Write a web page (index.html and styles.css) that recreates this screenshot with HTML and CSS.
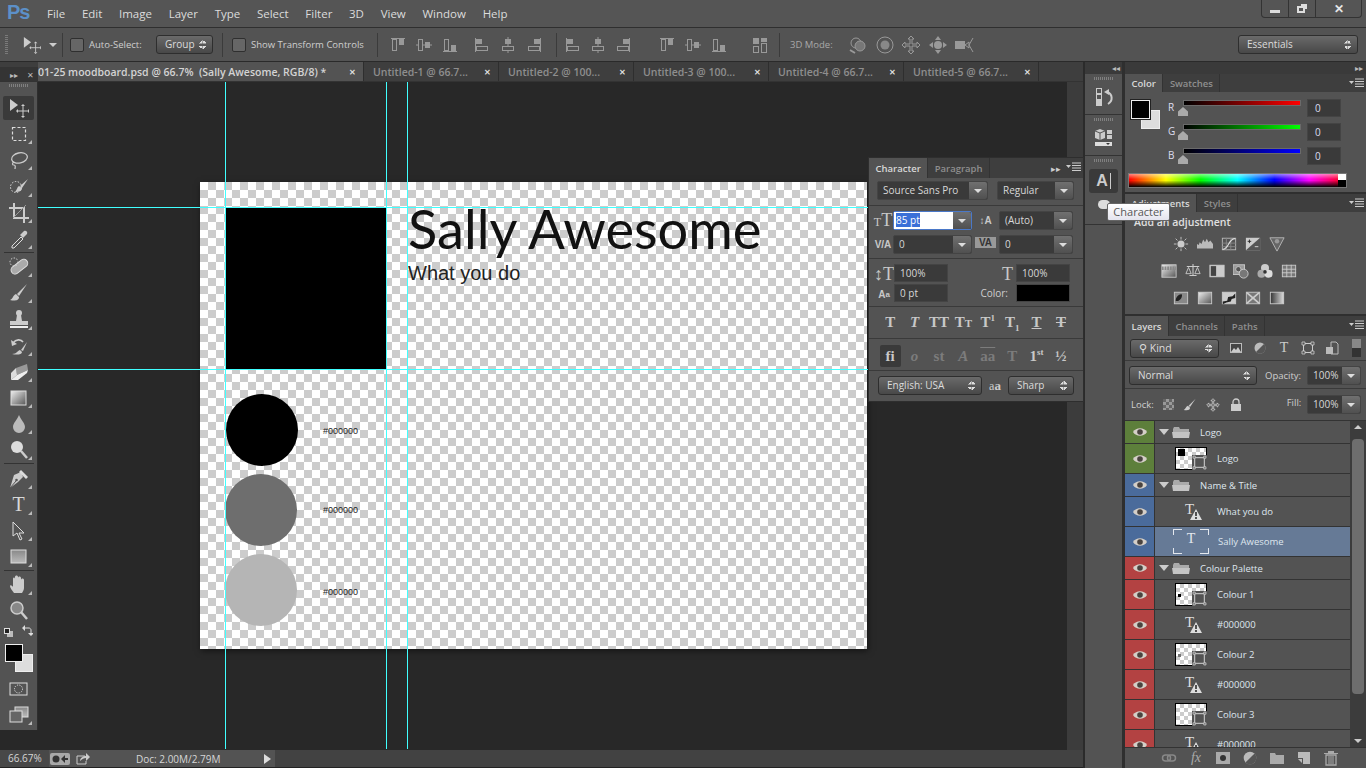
FILE: index.html
```html
<!DOCTYPE html>
<html lang="en">
<head>
    <meta charset="UTF-8">
    <title>Photoshop - moodboard</title>
    <link rel="stylesheet" href="styles.css">
</head>
<body>
<svg class="defs" width="0" height="0">
    <defs>
        <linearGradient id="gr" x1="0" y1="0" x2="1" y2="1"><stop offset="0" stop-color="#eee"/><stop offset="1" stop-color="#555"/></linearGradient>
        <linearGradient id="gv" x1="0" y1="0" x2="0" y2="1"><stop offset="0" stop-color="#888"/><stop offset="1" stop-color="#bbb"/></linearGradient>
        <symbol id="move" viewBox="0 0 20 20"><path d="M1 1v12l8-6z" fill="#ccc"/><path d="M14 8v10M9 13h10" stroke="#ccc" fill="none"/><path d="M14 6l2 2h-4zM14 20l2-2h-4zM7 13l2-2v4zM21 13l-2-2v4z" fill="#ccc"/></symbol>
        <symbol id="marquee" viewBox="0 0 20 20"><rect x="3.500" y="3.500" width="13" height="13" fill="none" stroke="#ddd" stroke-width="1.200" stroke-dasharray="3 2"/></symbol>
        <symbol id="lasso" viewBox="0 0 20 20"><ellipse cx="10.500" cy="8" rx="8" ry="5" transform="rotate(-12 10 8)" fill="none" stroke="#ccc" stroke-width="1.300"/><path d="M5 12c-2 1-2 3 0 3s1 3 1 4" fill="none" stroke="#ccc" stroke-width="1.200"/></symbol>
        <symbol id="quick" viewBox="0 0 20 20"><circle cx="7" cy="11" r="5.500" fill="none" stroke="#ddd" stroke-dasharray="1.500 1.500"/><path d="M19 3L11 10l2 2z" fill="#ccc"/><path d="M10 10c-2 1-2 4-4 6 4 0 7-1 7-4z" fill="#ccc"/></symbol>
        <symbol id="crop" viewBox="0 0 20 20"><path d="M5 0v15h15M0 5h15v15" fill="none" stroke="#ccc" stroke-width="2"/><path d="M17 2L4 15" stroke="#999"/></symbol>
        <symbol id="dropper" viewBox="0 0 20 20"><path d="M3 17l9-9 2 2-9 9H3z" fill="none" stroke="#ddd"/><path d="M11 6l4-4c2-1 4 1 3 3l-4 4z" fill="#ccc"/></symbol>
        <symbol id="heal" viewBox="0 0 20 20"><rect x="1" y="6" width="19" height="8" rx="4" transform="rotate(-38 10 10)" fill="#aaa" stroke="#ddd"/><circle cx="5" cy="5" r="4" fill="none" stroke="#ddd" stroke-dasharray="1.500 1.500"/></symbol>
        <symbol id="brush" viewBox="0 0 20 20"><path d="M18 1L8 11l2 2z" fill="#ccc"/><path d="M7 11c-3 1-3 5-6 6 4 1 9 1 9-3z" fill="#ccc"/></symbol>
        <symbol id="stamp" viewBox="0 0 20 20"><circle cx="10" cy="4" r="3" fill="#ccc"/><path d="M8 6h4l1 6h6v4H1v-4h6z" fill="#ccc"/><rect x="1" y="17" width="18" height="2" fill="#eee"/></symbol>
        <symbol id="history" viewBox="0 0 20 20"><path d="M4 7c3-4 8-4 10-1" fill="none" stroke="#ccc" stroke-width="1.600"/><path d="M2 4l1 6 5-2z" fill="#ccc"/><path d="M18 6l-6 8 2 1z" fill="#ccc"/><path d="M11 14c-2 0-3 4-8 4 4 1 10 1 10-2z" fill="#ccc"/></symbol>
        <symbol id="eraser" viewBox="0 0 20 20"><path d="M7 6l11-4 1 6-11 5z" fill="#999"/><path d="M7 6l-5 5v7l6-5z" fill="#ddd"/><path d="M2 18l6-5 11-5-1 3-9 7z" fill="#eee"/></symbol>
        <symbol id="gradient" viewBox="0 0 20 20"><rect x="2" y="3" width="15" height="14" fill="url(#gr)" stroke="#ddd"/></symbol>
        <symbol id="drop" viewBox="0 0 20 20"><path d="M10 1c-2 5-6 8-6 12a6 6 0 0 0 12 0c0-4-4-7-6-12z" fill="#bbb"/></symbol>
        <symbol id="dodge" viewBox="0 0 20 20"><circle cx="8" cy="7" r="6" fill="#ddd"/><path d="M12 11l6 7" stroke="#ccc" stroke-width="2.500"/></symbol>
        <symbol id="pen" viewBox="0 0 20 20"><path d="M12 3L5 6 1 19l8-6 5-5z" fill="#ccc"/><path d="M12 1l7 7-2 2-7-7z" fill="#ddd"/><path d="M1 19l6-7" stroke="#555"/><circle cx="7.500" cy="11" r="1.300" fill="#555"/></symbol>
        <symbol id="arrow" viewBox="0 0 20 20"><path d="M4 1v14l4-3 3 7 2-1-3-6h5z" fill="#555" stroke="#ddd"/></symbol>
        <symbol id="shape" viewBox="0 0 20 20"><rect x="2" y="3" width="15" height="13" fill="url(#gv)" stroke="#ddd"/></symbol>
        <symbol id="hand" viewBox="0 0 20 20"><path d="M5 18c-2-3-4-5-4-7s3 0 3 1V4c0-2 2-2 2 0V2c0-2 3-2 3 0v1c0-2 3-2 3 0v2c0-2 3-2 3 0v8c0 2-1 3-2 5z" fill="#ccc"/></symbol>
        <symbol id="zoom" viewBox="0 0 20 20"><circle cx="8" cy="7" r="6" fill="#888" stroke="#ccc" stroke-width="1.500"/><path d="M12 11l6 7" stroke="#ccc" stroke-width="2.500"/></symbol>
        <symbol id="mask" viewBox="0 0 20 20"><rect x="1" y="4" width="17" height="12" fill="none" stroke="#ddd"/><circle cx="9.500" cy="10" r="4" fill="none" stroke="#ddd" stroke-dasharray="1.200 1.200"/></symbol>
        <symbol id="screen" viewBox="0 0 20 20"><rect x="6" y="2" width="13" height="10" fill="url(#gv)" stroke="#ddd"/><rect x="1" y="6" width="12" height="11" fill="#666" stroke="#ddd"/></symbol>
        <symbol id="swap" viewBox="0 0 12 12"><path d="M3 3h5c1 0 2 1 2 2v4" fill="none" stroke="#ddd"/><path d="M4 0v6L1 3zM7 8h6l-3 3z" fill="#ddd"/></symbol>
        <symbol id="al-a" viewBox="0 0 18 18"><path d="M2 2.500h14" stroke="#999"/><rect x="3.500" y="3.500" width="4" height="11" fill="none" stroke="#999"/><rect x="10" y="3" width="5" height="6" fill="#999"/></symbol>
        <symbol id="al-b" viewBox="0 0 18 18"><path d="M1 9h16" stroke="#999"/><rect x="3.500" y="3.500" width="4" height="11" fill="#535353" stroke="#999"/><rect x="10" y="6" width="5" height="6" fill="#999"/></symbol>
        <symbol id="al-c" viewBox="0 0 18 18"><path d="M2 15.500h14" stroke="#999"/><rect x="3.500" y="3.500" width="4" height="11" fill="none" stroke="#999"/><rect x="10" y="9" width="5" height="6" fill="#999"/></symbol>
        <symbol id="dist" viewBox="0 0 18 18"><rect x="2" y="2" width="6" height="6" fill="#999"/><rect x="10" y="2" width="6" height="4" fill="#999"/><rect x="2.500" y="10.500" width="5" height="6" fill="none" stroke="#999"/><rect x="10.500" y="7.500" width="5" height="9" fill="none" stroke="#999"/></symbol>
        <symbol id="m1" viewBox="0 0 20 20"><circle cx="8" cy="8" r="5" fill="none" stroke="#999"/><circle cx="12" cy="11" r="5" fill="#777" stroke="#999"/><path d="M2 15l5 3" stroke="#999" stroke-width="2"/></symbol>
        <symbol id="m2" viewBox="0 0 20 20"><circle cx="10" cy="10" r="8" fill="none" stroke="#999"/><circle cx="10" cy="10" r="4.500" fill="#888"/></symbol>
        <symbol id="m3" viewBox="0 0 20 20"><path d="M10 1l3 3h-2v5h5V7l3 3-3 3v-2h-5v5h2l-3 3-3-3h2v-5H4v2l-3-3 3-3v2h5V4H7z" fill="none" stroke="#999"/></symbol>
        <symbol id="lockmove" viewBox="0 0 20 20"><path d="M10 1l3 3h-2v5h5V7l3 3-3 3v-2h-5v5h2l-3 3-3-3h2v-5H4v2l-3-3 3-3v2h5V4H7z" fill="none" stroke="#ddd"/></symbol>
        <symbol id="m4" viewBox="0 0 20 20"><path d="M10 1l3 4H7zM10 19l3-4H7zM1 10l4 3V7zM19 10l-4 3V7z" fill="#999"/><circle cx="10" cy="10" r="4" fill="#999"/></symbol>
        <symbol id="m5" viewBox="0 0 20 20"><rect x="1" y="6" width="10" height="8" fill="#999"/><path d="M11 10l4-3v6zM19 3l-4 7 4 7" fill="none" stroke="#999"/></symbol>
        <symbol id="menu" viewBox="0 0 16 10"><path d="M0 3h5L2.500 6z" fill="#ccc"/><path d="M6 1h9M6 3.500h9M6 6h9M6 8.500h9" stroke="#ccc"/></symbol>
        <symbol id="hist" viewBox="0 0 20 20"><rect x="2.500" y="1.500" width="5" height="5" fill="none" stroke="#ccc"/><rect x="2.500" y="7.500" width="5" height="5" fill="none" stroke="#ccc"/><rect x="2" y="13" width="6" height="6" fill="#ccc"/><path d="M13 5c6 2 6 9 1 12" fill="none" stroke="#ccc" stroke-width="2"/><path d="M10 5l5-3v6z" fill="#ccc"/></symbol>
        <symbol id="props" viewBox="0 0 20 20"><path d="M6 1l5 2v7l-5 2-5-2V3z" fill="#ccc"/><path d="M6 5v7M1 3l5 2 5-2" stroke="#555" fill="none"/><rect x="13" y="2" width="5" height="4" fill="#ccc"/><rect x="13" y="7" width="5" height="4" fill="#ccc"/><rect x="1" y="14" width="17" height="4" fill="#ddd"/><path d="M12 15h4l-2 2z" fill="#333"/></symbol>
        <symbol id="sun" viewBox="0 0 18 18"><circle cx="9" cy="9" r="4" fill="#ccc"/><path d="M9 1v3M9 14v3M1 9h3M14 9h3M3 3l2 2M13 13l2 2M15 3l-2 2M3 15l2-2" stroke="#ccc"/></symbol>
        <symbol id="levels" viewBox="0 0 18 18"><path d="M0 14V9l2 1 1-3 2 2 2-5 2 3 2-4 2 4 2-2 3 4v5z" fill="#bbb"/></symbol>
        <symbol id="curves" viewBox="0 0 18 18"><rect x="1.500" y="2.500" width="15" height="13" fill="none" stroke="#bbb"/><path d="M1 8h16M1 12h16M6 2v14M11 2v14" stroke="#888"/><path d="M2 15C9 15 8 3 16 3" fill="none" stroke="#ddd" stroke-width="1.300"/></symbol>
        <symbol id="expo" viewBox="0 0 18 18"><rect x="1" y="2" width="16" height="14" fill="#ccc"/><path d="M1 16L17 2v14z" fill="#555"/><path d="M3 6h4M5 4v4" stroke="#222"/><path d="M11 12h4" stroke="#ddd"/></symbol>
        <symbol id="tri" viewBox="0 0 18 18"><path d="M1 2h16L9 17z" fill="#666" stroke="#bbb"/><circle cx="9" cy="6" r="2.500" fill="#999"/></symbol>
        <symbol id="hue" viewBox="0 0 18 18"><rect x="1" y="2" width="16" height="14" fill="url(#gr)" stroke="#ccc"/><path d="M1 6h16" stroke="#888" stroke-width="4" stroke-dasharray="2 1"/></symbol>
        <symbol id="balance" viewBox="0 0 18 18"><path d="M9 1v13M2 4h14M5 14h8" stroke="#ccc" stroke-width="1.200"/><path d="M4 5L1 12h6zM14 5l-3 7h6z" fill="none" stroke="#ccc"/></symbol>
        <symbol id="bw" viewBox="0 0 18 18"><rect x="1" y="2.500" width="16" height="13" fill="#ccc" stroke="#ccc"/><rect x="2" y="3.500" width="6" height="11" fill="#444"/></symbol>
        <symbol id="camera" viewBox="0 0 18 18"><rect x="0" y="2" width="13" height="11" fill="#999" stroke="#ccc"/><circle cx="6" cy="7" r="3" fill="#555" stroke="#ccc"/><circle cx="12" cy="12" r="5" fill="#777" stroke="#ccc"/></symbol>
        <symbol id="mixer" viewBox="0 0 18 18"><circle cx="9" cy="5.500" r="4.500" fill="#ccc"/><circle cx="5" cy="12" r="4.500" fill="#aaa"/><circle cx="13" cy="12" r="4.500" fill="#ddd"/><circle cx="9" cy="10" r="2" fill="#333"/></symbol>
        <symbol id="lookup" viewBox="0 0 18 18"><rect x="1.500" y="2.500" width="15" height="13" fill="#777" stroke="#ccc"/><path d="M6.500 2v14M11.500 2v14M1 7h16M1 11h16" stroke="#ccc"/></symbol>
        <symbol id="inv" viewBox="0 0 18 18"><rect x="1.500" y="2.500" width="15" height="13" fill="#888" stroke="#ccc"/><path d="M3 12c3 2 8-3 7-7-3-1-7 3-7 7z" fill="#222"/></symbol>
        <symbol id="post" viewBox="0 0 18 18"><rect x="1.500" y="2.500" width="15" height="13" fill="url(#gr)" stroke="#ccc"/></symbol>
        <symbol id="thresh" viewBox="0 0 18 18"><rect x="1.500" y="2.500" width="15" height="13" fill="#ccc" stroke="#ccc"/><path d="M2 13l5-1 1-4 5-1 3-3v5l-4 1-1 3-5 1-4 2z" fill="#222"/></symbol>
        <symbol id="sel-x" viewBox="0 0 18 18"><rect x="1.500" y="2.500" width="15" height="13" fill="#777" stroke="#ccc"/><path d="M2 3l14 12M16 3L2 15" stroke="#ccc" stroke-width="2"/></symbol>
        <symbol id="gmap" viewBox="0 0 18 18"><defs><linearGradient id="gh"><stop offset="0" stop-color="#333"/><stop offset="1" stop-color="#ddd"/></linearGradient></defs><rect x="1.500" y="2.500" width="15" height="13" fill="url(#gh)" stroke="#ccc"/></symbol>
        <symbol id="picture" viewBox="0 0 14 14"><rect x="1.500" y="2.500" width="11" height="9" fill="#444" stroke="#bbb"/><path d="M2 11l3-4 2 2 2-3 3 5z" fill="#ccc"/></symbol>
        <symbol id="halfc" viewBox="0 0 14 14"><circle cx="7" cy="7" r="5.500" fill="#bbb"/><path d="M3 11L11 3a5.500 5.500 0 0 1-8 8z" fill="#555"/></symbol>
        <symbol id="bracket" viewBox="0 0 14 14"><rect x="2.500" y="2.500" width="9" height="9" fill="none" stroke="#ccc"/><path d="M1 1h3v3H1zM10 1h3v3h-3zM1 10h3v3H1zM10 10h3v3h-3z" fill="#535353" stroke="#ccc" stroke-width=".8"/></symbol>
        <symbol id="docf" viewBox="0 0 14 14"><path d="M6 1h5l2 2v10H6z" fill="none" stroke="#bbb"/><rect x="1" y="6" width="7" height="7" fill="#bbb"/></symbol>
        <symbol id="eye" viewBox="0 0 14 10"><path d="M0 5c3-5 11-5 14 0-3 5-11 5-14 0z" fill="#d5cfc8"/><circle cx="7" cy="5" r="2.800" fill="#4a4440"/></symbol>
        <symbol id="folder" viewBox="0 0 18 12"><path d="M1 11V3l1-2h5l1 2h9v8z" fill="#aaa"/><path d="M0 6h18l-1 6H1z" fill="#c4c4c4"/></symbol>
        <symbol id="typewarn" viewBox="0 0 18 18"><path d="M11 6l6 11H5z" fill="#ddd"/><path d="M11 9v4M11 14v2" stroke="#222" stroke-width="1.500"/></symbol>
        <symbol id="sobj" viewBox="0 0 14 14"><rect x="2.500" y="2.500" width="9" height="9" fill="none" stroke="#ccc"/><path d="M1 1h2v2H1zM11 1h2v2h-2zM1 11h2v2H1zM11 11h2v2h-2z" fill="#535353" stroke="#ccc" stroke-width=".8"/></symbol>
        <symbol id="link" viewBox="0 0 16 16"><rect x="1.500" y="5" width="8" height="6" rx="3" fill="none" stroke="#888" stroke-width="1.500"/><rect x="6.500" y="5" width="8" height="6" rx="3" fill="none" stroke="#888" stroke-width="1.500"/></symbol>
        <symbol id="addmask" viewBox="0 0 16 16"><rect x="1" y="2" width="14" height="12" fill="#aaa"/><circle cx="8" cy="8" r="3" fill="#333"/></symbol>
        <symbol id="newfold" viewBox="0 0 16 16"><path d="M1 14V3h5l1 2h8v9z" fill="#aaa"/></symbol>
        <symbol id="newlayer" viewBox="0 0 16 16"><path d="M2 2h12v12H7V8H2z" fill="#bbb"/><path d="M2 9h4v4z" fill="#bbb"/></symbol>
        <symbol id="trash" viewBox="0 0 16 16"><path d="M5 1h6v2h4v1H1V3h4z" fill="#aaa"/><path d="M3 5h10v10H3z" fill="none" stroke="#aaa" stroke-width="1.300"/><path d="M6 6v8M8 6v8M10 6v8" stroke="#aaa"/></symbol>
        <symbol id="padlock" viewBox="0 0 14 14"><path d="M4 6V4a3 3 0 0 1 6 0v2" fill="none" stroke="#ccc" stroke-width="1.300"/><rect x="2" y="6" width="10" height="7" fill="#ccc"/></symbol>
        <symbol id="chip" viewBox="0 0 20 12"><rect width="20" height="12" rx="2" fill="#a8a8a8"/><circle cx="6" cy="6" r="3.500" fill="#333"/><path d="M11 6l4-4v3h3v2h-3v3z" fill="#333"/></symbol>
        <symbol id="share" viewBox="0 0 14 12"><path d="M9 3H1v8h9V8" fill="none" stroke="#ccc"/><path d="M4 8c0-3 3-5 6-5V0l4 4-4 4V5C8 5 6 6 4 8z" fill="#ccc"/></symbol>
    </defs>
</svg>

<div class="app">
    <header class="menubar">
        <span class="ps-logo">Ps</span>
        <nav class="menu">
            <span>File</span><span>Edit</span><span>Image</span><span>Layer</span><span>Type</span><span>Select</span><span>Filter</span><span>3D</span><span>View</span><span>Window</span><span>Help</span>
        </nav>
        <div class="winctl">
            <span class="win-btn win-min"><i></i></span>
            <span class="win-btn win-max"><i></i></span>
            <span class="win-btn win-close">&#10005;</span>
        </div>
    </header>

    <div class="options">
        <span class="grip-v"></span>
        <svg class="opt-move"><use href="#move"/></svg>
        <span class="caret opt-caret"></span>
        <span class="vsep sep-a"></span>
        <span class="check check-a"></span>
        <span class="opt-label label-auto">Auto-Select:</span>
        <span class="sel sel-group">Group</span>
        <span class="vsep sep-b"></span>
        <span class="check check-b"></span>
        <span class="opt-label label-show">Show Transform Controls</span>
        <span class="vsep sep-c"></span>
        <div class="icon-set set-1">
            <svg><use href="#al-a"/></svg><svg><use href="#al-b"/></svg><svg><use href="#al-c"/></svg>
        </div>
        <div class="icon-set set-2">
            <svg class="rot"><use href="#al-a"/></svg><svg class="rot"><use href="#al-b"/></svg><svg class="rot"><use href="#al-c"/></svg>
        </div>
        <span class="vsep sep-d"></span>
        <div class="icon-set set-3">
            <svg class="rot"><use href="#al-a"/></svg><svg class="rot"><use href="#al-b"/></svg><svg class="rot"><use href="#al-c"/></svg>
        </div>
        <div class="icon-set set-4">
            <svg><use href="#al-a"/></svg><svg><use href="#al-b"/></svg><svg><use href="#al-c"/></svg>
        </div>
        <svg class="opt-dist"><use href="#dist"/></svg>
        <span class="vsep sep-e"></span>
        <span class="opt-label label-3d">3D Mode:</span>
        <div class="icon-set set-3d">
            <svg><use href="#m1"/></svg><svg><use href="#m2"/></svg><svg><use href="#m3"/></svg><svg><use href="#m4"/></svg><svg><use href="#m5"/></svg>
        </div>
        <span class="sel sel-work">Essentials</span>
    </div>

    <div class="workspace">
        <div class="main-col">
            <div class="tabbar">
                <div class="tool-head"><span>&#9656;&#9656;</span><span>&#10005;</span></div>
                <div class="tab tab-active"><span class="tab-clip">01-25 moodboard.psd @ 66.7% &nbsp;(Sally Awesome, RGB/8) *</span><b>&#10005;</b></div>
                <div class="tab"><span class="tab-clip">Untitled-1 @ 66.7...</span><b>&#10005;</b></div>
                <div class="tab"><span class="tab-clip">Untitled-2 @ 100...</span><b>&#10005;</b></div>
                <div class="tab"><span class="tab-clip">Untitled-3 @ 100...</span><b>&#10005;</b></div>
                <div class="tab"><span class="tab-clip">Untitled-4 @ 66.7...</span><b>&#10005;</b></div>
                <div class="tab"><span class="tab-clip">Untitled-5 @ 66.7...</span><b>&#10005;</b></div>
            </div>
            <div class="doc-row">
                <aside class="tools">
                    <span class="grip-h"></span>
                    <span class="tool tool-on"><svg><use href="#move"/></svg></span>
                    <span class="tool more"><svg><use href="#marquee"/></svg></span>
                    <span class="tool more"><svg><use href="#lasso"/></svg></span>
                    <span class="tool more"><svg><use href="#quick"/></svg></span>
                    <span class="tool more"><svg><use href="#crop"/></svg></span>
                    <span class="tool more"><svg><use href="#dropper"/></svg></span>
                    <span class="tool-sep"></span>
                    <span class="tool more"><svg><use href="#heal"/></svg></span>
                    <span class="tool more"><svg><use href="#brush"/></svg></span>
                    <span class="tool more"><svg><use href="#stamp"/></svg></span>
                    <span class="tool more"><svg><use href="#history"/></svg></span>
                    <span class="tool more"><svg><use href="#eraser"/></svg></span>
                    <span class="tool more"><svg><use href="#gradient"/></svg></span>
                    <span class="tool more"><svg><use href="#drop"/></svg></span>
                    <span class="tool more"><svg><use href="#dodge"/></svg></span>
                    <span class="tool-sep"></span>
                    <span class="tool more"><svg><use href="#pen"/></svg></span>
                    <span class="tool more tool-type">T</span>
                    <span class="tool more"><svg><use href="#arrow"/></svg></span>
                    <span class="tool more"><svg><use href="#shape"/></svg></span>
                    <span class="tool-sep"></span>
                    <span class="tool more"><svg><use href="#hand"/></svg></span>
                    <span class="tool"><svg><use href="#zoom"/></svg></span>
                    <div class="mini-colors"><span class="mini-sw"></span><svg class="mini-swap"><use href="#swap"/></svg></div>
                    <div class="fgbg"><span class="bg-sw"></span><span class="fg-sw"></span></div>
                    <span class="tool"><svg><use href="#mask"/></svg></span>
                    <span class="tool more"><svg><use href="#screen"/></svg></span>
                </aside>
                <main class="canvas">
                    <div class="doc">
                        <div class="logo-box"></div>
                        <div class="doc-title">Sally Awesome</div>
                        <div class="doc-sub">What you do</div>
                        <div class="dot dot-1"></div>
                        <div class="dot dot-2"></div>
                        <div class="dot dot-3"></div>
                        <span class="hex hex-1">#000000</span>
                        <span class="hex hex-2">#000000</span>
                        <span class="hex hex-3">#000000</span>
                    </div>
                    <i class="guide-v gv-1"></i>
                    <i class="guide-v gv-2"></i>
                    <i class="guide-v gv-3"></i>
                    <i class="guide-h gh-1"></i>
                    <i class="guide-h gh-2"></i>
                </main>
                <div class="vscroll"></div>
            </div>
            <footer class="status">
                <span class="zoom-val">66.67%</span>
                <div class="status-info">
                    <svg class="status-chip"><use href="#chip"/></svg>
                    <svg class="status-share"><use href="#share"/></svg>
                    <span class="doc-size">Doc: 2.00M/2.79M</span>
                    <span class="status-arrow"></span>
                </div>
            </footer>
        </div>

        <div class="dock">
            <div class="dock-head">&#9666;&#9666;</div>
            <div class="dock-cell"><span class="grip-h"></span><svg class="dock-ico"><use href="#hist"/></svg></div>
            <div class="dock-cell"><span class="grip-h"></span><svg class="dock-ico"><use href="#props"/></svg></div>
            <div class="dock-cell dock-last">
                <span class="grip-h"></span>
                <span class="dock-a">A<i></i></span>
                <span class="dock-ball"></span>
            </div>
        </div>

        <div class="panels">
            <div class="panels-head">&#9656;&#9656;</div>
            <section class="panel panel-color">
                <div class="ptabs">
                    <span class="ptab ptab-on">Color</span><span class="ptab">Swatches</span>
                    <svg class="pmenu"><use href="#menu"/></svg>
                </div>
                <div class="color-body">
                    <div class="swatches"><span class="sw-bg"></span><span class="sw-fg"></span></div>
                    <div class="sliders">
                        <div class="slider"><span class="sl-name">R</span><span class="sl-track sl-r"></span><span class="num">0</span></div>
                        <div class="slider"><span class="sl-name">G</span><span class="sl-track sl-g"></span><span class="num">0</span></div>
                        <div class="slider"><span class="sl-name">B</span><span class="sl-track sl-b"></span><span class="num">0</span></div>
                    </div>
                </div>
                <div class="spectrum"><span></span></div>
            </section>
            <section class="panel panel-adjust">
                <div class="ptabs">
                    <span class="ptab ptab-on">Adjustments</span><span class="ptab">Styles</span>
                    <svg class="pmenu"><use href="#menu"/></svg>
                </div>
                <div class="adj-title">Add an adjustment</div>
                <div class="adj-row"><svg><use href="#sun"/></svg><svg><use href="#levels"/></svg><svg><use href="#curves"/></svg><svg><use href="#expo"/></svg><svg><use href="#tri"/></svg></div>
                <div class="adj-row"><svg><use href="#hue"/></svg><svg><use href="#balance"/></svg><svg><use href="#bw"/></svg><svg><use href="#camera"/></svg><svg><use href="#mixer"/></svg><svg><use href="#lookup"/></svg></div>
                <div class="adj-row"><svg><use href="#inv"/></svg><svg><use href="#post"/></svg><svg><use href="#thresh"/></svg><svg><use href="#sel-x"/></svg><svg><use href="#gmap"/></svg></div>
            </section>
            <section class="panel panel-layers">
                <div class="ptabs">
                    <span class="ptab ptab-on">Layers</span><span class="ptab">Channels</span><span class="ptab">Paths</span>
                    <svg class="pmenu"><use href="#menu"/></svg>
                </div>
                <div class="lay-filter">
                    <span class="sel sel-kind">&#9906; Kind</span>
                    <div class="filter-icons">
                        <svg><use href="#picture"/></svg><svg><use href="#halfc"/></svg><span class="filter-t">T</span><svg><use href="#bracket"/></svg><svg><use href="#docf"/></svg>
                    </div>
                    <span class="filter-toggle"></span>
                </div>
                <div class="lay-blend">
                    <span class="sel sel-normal">Normal</span>
                    <span class="opt-label">Opacity:</span>
                    <span class="combo combo-pct"><em>100%</em><i class="combo-btn"></i></span>
                </div>
                <div class="lay-lock">
                    <span class="opt-label">Lock:</span>
                    <span class="lock-px"></span>
                    <svg class="lock-i"><use href="#brush"/></svg>
                    <svg class="lock-i"><use href="#lockmove"/></svg>
                    <svg class="lock-i"><use href="#padlock"/></svg>
                    <span class="opt-label label-fill">Fill:</span>
                    <span class="combo combo-pct"><em>100%</em><i class="combo-btn"></i></span>
                </div>
                <div class="lay-list">
                    <div class="rows">
                        <div class="row row-group green"><span class="eye"><svg><use href="#eye"/></svg></span><span class="twirl"></span><svg class="folder"><use href="#folder"/></svg><span class="lname">Logo</span></div>
                        <div class="row green"><span class="eye"><svg><use href="#eye"/></svg></span><span class="thumb thumb-logo"><svg><use href="#sobj"/></svg></span><span class="lname">Logo</span></div>
                        <div class="row row-group blue"><span class="eye"><svg><use href="#eye"/></svg></span><span class="twirl"></span><svg class="folder"><use href="#folder"/></svg><span class="lname">Name &amp; Title</span></div>
                        <div class="row blue"><span class="eye"><svg><use href="#eye"/></svg></span><span class="ltype">T<svg><use href="#typewarn"/></svg></span><span class="lname">What you do</span></div>
                        <div class="row blue row-sel"><span class="eye"><svg><use href="#eye"/></svg></span><span class="tframe">T</span><span class="lname">Sally Awesome</span></div>
                        <div class="row row-group red"><span class="eye"><svg><use href="#eye"/></svg></span><span class="twirl"></span><svg class="folder"><use href="#folder"/></svg><span class="lname">Colour Palette</span></div>
                        <div class="row red"><span class="eye"><svg><use href="#eye"/></svg></span><span class="thumb thumb-c1"><svg><use href="#sobj"/></svg></span><span class="lname">Colour 1</span></div>
                        <div class="row red"><span class="eye"><svg><use href="#eye"/></svg></span><span class="ltype">T<svg><use href="#typewarn"/></svg></span><span class="lname">#000000</span></div>
                        <div class="row red"><span class="eye"><svg><use href="#eye"/></svg></span><span class="thumb thumb-c2"><svg><use href="#sobj"/></svg></span><span class="lname">Colour 2</span></div>
                        <div class="row red"><span class="eye"><svg><use href="#eye"/></svg></span><span class="ltype">T<svg><use href="#typewarn"/></svg></span><span class="lname">#000000</span></div>
                        <div class="row red"><span class="eye"><svg><use href="#eye"/></svg></span><span class="thumb thumb-c3"><svg><use href="#sobj"/></svg></span><span class="lname">Colour 3</span></div>
                        <div class="row red"><span class="eye"><svg><use href="#eye"/></svg></span><span class="ltype">T<svg><use href="#typewarn"/></svg></span><span class="lname">#000000</span></div>
                    </div>
                    <div class="lay-scroll"><i class="up"></i><span class="thumbbar"></span><i class="down"></i></div>
                </div>
                <div class="lay-foot">
                    <svg><use href="#link"/></svg><span class="fx">fx</span><svg><use href="#addmask"/></svg><svg><use href="#halfc"/></svg><svg><use href="#newfold"/></svg><svg><use href="#newlayer"/></svg><svg><use href="#trash"/></svg>
                </div>
            </section>
        </div>
    </div>

    <!-- floating character panel -->
    <section class="char-panel">
        <div class="ptabs char-tabs">
            <span class="ptab ptab-on">Character</span><span class="ptab">Paragraph</span>
            <span class="char-arrows">&#9656;&#9656;</span>
            <svg class="pmenu"><use href="#menu"/></svg>
        </div>
        <div class="char-font">
            <span class="combo combo-family"><em>Source Sans Pro</em><i class="combo-btn"></i></span>
            <span class="combo combo-style"><em>Regular</em><i class="combo-btn"></i></span>
        </div>
        <div class="char-size">
            <span class="ci ci-serif"><small>T</small>T</span>
            <span class="combo combo-active"><em><mark>85 pt</mark></em><i class="combo-btn"></i></span>
            <span class="ci ci-small">&#8597;A</span>
            <span class="combo"><em>(Auto)</em><i class="combo-btn"></i></span>
            <span class="ci ci-small">V/A</span>
            <span class="combo"><em>0</em><i class="combo-btn"></i></span>
            <span class="ci ci-small ci-boxed">VA</span>
            <span class="combo"><em>0</em><i class="combo-btn"></i></span>
        </div>
        <div class="char-scale">
            <span class="ci ci-serif">&#8597;T</span>
            <span class="field">100%</span>
            <span class="ci ci-serif ci-right">T</span>
            <span class="field">100%</span>
            <span class="ci ci-small">A<sup>a</sup></span>
            <span class="field">0 pt</span>
            <span class="ci-color">Color:</span>
            <span class="color-chip"></span>
        </div>
        <div class="glyphs">
            <span>T</span><span><i>T</i></span><span>TT</span><span>T<small>T</small></span><span>T<sup>1</sup></span><span>T<sub>1</sub></span><span><u>T</u></span><span><s>T</s></span>
        </div>
        <div class="glyphs glyphs-2">
            <span class="glyph-on">fi</span><span class="dim"><i>o</i></span><span class="dim">st</span><span class="dim"><i>A</i></span><span class="dim aa">aa</span><span class="dim">T</span><span>1<sup>st</sup></span><span>&#189;</span>
        </div>
        <div class="char-lang">
            <span class="sel sel-lang">English: USA</span>
            <span class="aa-ico">a<b>a</b></span>
            <span class="sel sel-sharp">Sharp</span>
        </div>
    </section>

    <div class="tooltip">Character</div>
</div>
</body>
</html>
```

FILE: styles.css
```css
* { box-sizing: border-box; }

html, body {
    margin: 0;
    padding: 0;
    background: #535353;
}

.defs { position: absolute; }

.app {
    position: relative;
    width: 1366px;
    height: 768px;
    overflow: hidden;
    display: flex;
    flex-direction: column;
    background: #535353;
    color: #d6d6d6;
    font-family: "Open Sans", sans-serif;
    font-size: 10px;
}

/* menu bar */
.menubar {
    height: 28px;
    flex: none;
    display: flex;
    align-items: flex-start;
    background: #555;
    border-bottom: 1px solid #2f2f2f;
}
.ps-logo {
    width: 47px;
    padding-left: 7px;
    color: #5c90c8;
    font: bold 20px/24px "Liberation Sans", sans-serif;
    letter-spacing: -1px;
}
.menu {
    display: flex;
    gap: 16.700px;
    font-size: 11.500px;
    line-height: 27px;
    color: #dcdcdc;
}
.winctl {
    margin-left: auto;
    margin-right: 4px;
    height: 18px;
    width: 101px;
    display: flex;
    border: 1px solid #333;
    border-top: 0;
    border-radius: 0 0 4px 4px;
}
.win-btn {
    width: 27px;
    display: flex;
    align-items: center;
    justify-content: center;
    border-right: 1px solid #333;
}
.win-close {
    flex: 1;
    border-right: 0;
    font-size: 12px;
    font-weight: bold;
    color: #e6e6e6;
}
.win-min i { width: 10px; height: 3px; margin-top: 6px; background: #ddd; }
.win-max i { width: 8px; height: 7px; margin: 2px 2px 0 0; border: 2px solid #ddd; box-shadow: 3px -3px 0 -1px #ddd; }

/* options bar */
.options {
    height: 34px;
    flex: none;
    display: flex;
    align-items: center;
    background: #535353;
    border-bottom: 1px solid #2a2a2a;
    padding-left: 5px;
}
.grip-v {
    width: 3px;
    height: 20px;
    background: repeating-linear-gradient(#7a7a7a 0 1px, transparent 1px 2px);
}
.opt-move { width: 18px; height: 18px; margin-left: 15px; }
.caret {
    width: 0;
    height: 0;
    border: 4px solid transparent;
    border-top: 4px solid #ccc;
    border-bottom: 0;
}
.opt-caret { margin-left: 8px; }
.vsep { width: 1px; height: 24px; background: #3b3b3b; }
.sep-a { margin-left: 5px; }
.check {
    width: 14px;
    height: 14px;
    border: 1px solid #2f2f2f;
    border-radius: 2px;
    background: #666;
}
.check-a { margin-left: 7px; }
.opt-label {
    white-space: nowrap;
    color: #cfcfcf;
    font-size: 9.500px;
}
.label-auto { margin-left: 5px; width: 67px; }
.label-show { margin-left: 5px; width: 126px; }
.sel {
    position: relative;
    display: block;
    height: 19px;
    padding-left: 8px;
    border: 1px solid #2e2e2e;
    border-radius: 3px;
    background: linear-gradient(#6a6a6a, #484848);
    color: #dcdcdc;
    font-size: 10px;
    line-height: 17px;
    white-space: nowrap;
}
.sel::after {
    content: "";
    position: absolute;
    right: 6px;
    top: 4px;
    width: 7px;
    height: 9px;
    background:
        linear-gradient(to bottom right, transparent 50%, #ddd 50%) 0 0/3.500px 3.500px no-repeat,
        linear-gradient(to bottom left, transparent 50%, #ddd 50%) 3.500px 0/3.500px 3.500px no-repeat,
        linear-gradient(to top right, transparent 50%, #ddd 50%) 0 5.500px/3.500px 3.500px no-repeat,
        linear-gradient(to top left, transparent 50%, #ddd 50%) 3.500px 5.500px/3.500px 3.500px no-repeat;
}
.sel-group { width: 57px; }
.sep-b { margin-left: 9px; }
.check-b { margin-left: 9px; }
.icon-set { display: flex; }
.icon-set svg { width: 18px; height: 18px; }
.icon-set .rot { transform: rotate(-90deg); }
.set-1 { margin-left: 11px; gap: 8px; width: 70px; }
.set-2 { margin-left: 14px; gap: 8px; }
.sep-d { margin-left: 13px; }
.set-3 { margin-left: 7px; gap: 7px; }
.set-4 { margin-left: 26px; gap: 8px; }
.opt-dist { width: 18px; height: 18px; margin-left: 23px; }
.sep-e { margin-left: 10px; }
.label-3d { margin-left: 10px; color: #a8a8a8; width: 51px; }
.set-3d { gap: 6.500px; margin-left: 7px; }
.set-3d svg { width: 20px; height: 20px; }
.sel-work {
    width: 120px;
    margin-left: auto;
    margin-right: 8px;
}

/* main area */
.workspace {
    flex: 1;
    min-height: 0;
    display: flex;
}
.main-col {
    width: 1084px;
    display: flex;
    flex-direction: column;
    border-right: 1px solid #2b2b2b;
}
.tabbar {
    height: 20px;
    flex: none;
    display: flex;
    background: #3e3e3e;
    border-bottom: 1px solid #333;
}
.tool-head {
    width: 38px;
    height: 14px;
    margin-top: 5px;
    padding: 0 4px 0 10px;
    display: flex;
    justify-content: space-between;
    align-items: center;
    background: #343434;
    color: #bbb;
    font-size: 8px;
}
.tab {
    width: 135px;
    display: flex;
    align-items: center;
    justify-content: space-between;
    padding: 0 7px 0 9px;
    border-right: 1px solid #2e2e2e;
    color: #8e8e8e;
    font-size: 10.500px;
    font-weight: 600;
}
.tab b { font-size: 8px; color: #ddd; }
.tab-active {
    width: 326px;
    padding-left: 0;
    background: #535353;
    color: #d4d4d4;
}
.tab-clip { white-space: nowrap; }

.doc-row {
    flex: 1;
    min-height: 0;
    display: flex;
    background: #282828;
}
.tools {
    width: 38px;
    height: 648px;
    flex: none;
    display: flex;
    flex-direction: column;
    align-items: center;
    background: #535353;
    border-right: 1px solid #2e2e2e;
}
.grip-h {
    display: block;
    flex: none;
    width: 20px;
    height: 3px;
    margin: 2px auto 0;
    background: repeating-linear-gradient(90deg, #808080 0 1px, transparent 1px 2px);
}
.tools > .grip-h { margin-bottom: 9px; }
.tool {
    position: relative;
    width: 31px;
    height: 26.200px;
    flex: none;
    display: flex;
    align-items: center;
    justify-content: center;
}
.tool svg { width: 20px; height: 20px; }
.tool-on {
    height: 24px;
    margin-bottom: 1px;
    background: #3a3a3a;
    border-radius: 2px;
}
.more::after {
    content: "";
    position: absolute;
    right: 2px;
    bottom: 3px;
    border: 2px solid transparent;
    border-right-color: #bbb;
    border-bottom-color: #bbb;
}
.tool-type { font: 20px "Liberation Serif", serif; color: #d8d8d8; }
.tool-sep {
    flex: none;
    width: 30px;
    height: 1px;
    margin-bottom: 1px;
    background: #333;
}
.mini-colors {
    width: 31px;
    height: 13px;
    flex: none;
    display: flex;
    justify-content: space-between;
    align-items: center;
    padding: 0 1px;
}
.mini-sw {
    width: 6px;
    height: 6px;
    background: #222;
    border: 1px solid #ddd;
    box-shadow: 3px 3px 0 #bbb;
}
.mini-swap { width: 12px; height: 12px; }
.fgbg {
    position: relative;
    flex: none;
    width: 31px;
    height: 38px;
}
.fg-sw, .bg-sw {
    position: absolute;
    width: 18px;
    height: 18px;
    border: 1px solid #eee;
}
.fg-sw { left: 2px; top: 6px; background: #000; }
.bg-sw { left: 12px; top: 16px; background: #ddd; }

.canvas {
    position: relative;
    flex: 1;
    overflow: hidden;
    background: #282828;
}
.doc {
    position: absolute;
    left: 162px;
    top: 100px;
    width: 667px;
    height: 467px;
    color: #000;
    background: conic-gradient(#ccc 25%, #fff 0 50%, #ccc 0 75%, #fff 0) 0 0/16px 16px;
    box-shadow: 1px 2px 6px rgba(0, 0, 0, 0.5);
}
.logo-box {
    position: absolute;
    left: 26px;
    top: 26px;
    width: 160px;
    height: 161px;
    background: #000;
}
.doc-title {
    position: absolute;
    left: 208px;
    top: 13px;
    font: 400 54.200px/68px Lato, sans-serif;
    color: #111;
    white-space: nowrap;
}
.doc-sub {
    position: absolute;
    left: 208px;
    top: 78px;
    color: #222;
    font: 20px/26px "Liberation Sans", sans-serif;
}
.dot {
    position: absolute;
    width: 72px;
    height: 72px;
    border-radius: 50%;
}
.dot-1 { left: 26px; top: 212px; background: #000; }
.dot-2 { left: 25px; top: 292px; background: #6e6e6e; }
.dot-3 { left: 25px; top: 372px; background: #b5b5b5; }
.hex {
    position: absolute;
    left: 123px;
    font: 9px/12px "Liberation Sans", sans-serif;
    color: #222;
}
.hex-1 { top: 243px; }
.hex-2 { top: 322px; }
.hex-3 { top: 404px; }
.guide-v, .guide-h {
    position: absolute;
    background: #40ffff;
}
.guide-v { top: 0; width: 1px; height: 667px; }
.guide-h { left: 0; height: 1px; width: 1029px; }
.gv-1 { left: 187px; }
.gv-2 { left: 348px; }
.gv-3 { left: 369px; }
.gh-1 { top: 125px; }
.gh-2 { top: 287px; }
.vscroll {
    width: 16px;
    flex: none;
    background: #3c3c3c;
}

/* status bar */
.status {
    height: 18px;
    flex: none;
    display: flex;
    align-items: center;
    background: #424242;
    border-bottom: 1px solid #222;
}
.zoom-val {
    width: 49px;
    padding-left: 8px;
    font-size: 10px;
    line-height: 17px;
    background: #484848;
}
.status-info {
    width: 226px;
    height: 17px;
    display: flex;
    align-items: center;
    position: relative;
    background: #535353;
}
.status-chip { width: 20px; height: 12px; margin-left: 1px; }
.status-share { width: 14px; height: 12px; margin-left: 6px; }
.doc-size { margin-left: 46px; white-space: nowrap; font-size: 10px; }
.status-arrow {
    position: absolute;
    left: 215px;
    top: 4px;
    border: 5px solid transparent;
    border-left: 7px solid #ddd;
    border-right: 0;
}

/* collapsed dock */
.dock {
    width: 41px;
    flex: none;
    background: #535353;
    border-left: 1px solid #2b2b2b;
    border-right: 3px solid #2f2f2f;
}
.dock-head {
    height: 12px;
    background: #3a3a3a;
    color: #bbb;
    font-size: 8px;
    line-height: 12px;
    text-align: right;
    padding-right: 2px;
}
.dock-cell {
    height: 41px;
    position: relative;
    border-bottom: 1px solid #333;
    padding-top: 1px;
}
.dock-ico {
    display: block;
    width: 20px;
    height: 20px;
    margin: 7px 0 0 9px;
}
.dock-last { height: 69px; }
.dock-a {
    display: flex;
    align-items: center;
    justify-content: center;
    gap: 2px;
    width: 29px;
    height: 24px;
    margin: 7px 0 0 4px;
    background: #3a3a3a;
    border-radius: 3px;
    color: #ccc;
    font: bold 16px "Liberation Sans", sans-serif;
}
.dock-a i { width: 1px; height: 16px; background: #ccc; }
.dock-ball {
    position: absolute;
    left: 13px;
    top: 44px;
    width: 12px;
    height: 9px;
    background: #ddd;
    border-radius: 5px;
}

/* right panels */
.panels {
    flex: 1;
    min-width: 0;
    display: flex;
    flex-direction: column;
}
.panels-head {
    height: 12px;
    flex: none;
    background: #3a3a3a;
    color: #bbb;
    font-size: 8px;
    line-height: 12px;
    text-align: right;
    padding-right: 3px;
}
.panel {
    border-bottom: 2px solid #2f2f2f;
}
.ptabs {
    position: relative;
    height: 18px;
    display: flex;
    background: #3e3e3e;
}
.ptab {
    padding: 0 6.500px;
    display: flex;
    align-items: center;
    border-right: 1px solid #333;
    color: #8e8e8e;
    font-size: 9.500px;
    font-weight: 600;
}
.ptab-on { background: #535353; color: #d8d8d8; }
.pmenu {
    position: absolute;
    right: 1px;
    top: 4px;
    width: 16px;
    height: 10px;
}
.panel-color { height: 120px; }
.color-body { height: 81px; display: flex; }
.swatches {
    position: relative;
    width: 43px;
    flex: none;
}
.sw-fg, .sw-bg {
    position: absolute;
    border: 1px solid #eee;
}
.sw-fg { left: 6px; top: 8px; width: 19px; height: 19px; background: #000; outline: 1px solid #222; }
.sw-bg { left: 16px; top: 18px; width: 19px; height: 19px; background: #ddd; }
.sliders { padding-top: 7px; }
.slider {
    height: 24px;
    display: flex;
    align-items: flex-start;
    position: relative;
}
.sl-name { width: 15px; font-size: 10px; line-height: 16px; color: #dde; }
.sl-track {
    position: relative;
    width: 118px;
    height: 6px;
    margin-top: 1px;
    border: 1px solid #6a6a6a;
}
.sl-track::after {
    content: "";
    position: absolute;
    left: -6px;
    top: 6px;
    width: 10px;
    height: 9px;
    background: #aaa;
    clip-path: polygon(50% 0, 100% 50%, 100% 100%, 0 100%, 0 50%);
}
.sl-r { background: linear-gradient(90deg, #000, #f00); }
.sl-g { background: linear-gradient(90deg, #000, #0f0); }
.sl-b { background: linear-gradient(90deg, #000, #00f); }
.num {
    width: 34px;
    height: 18px;
    margin-left: 6px;
    padding-left: 7px;
    background: #3a3a3a;
    border: 1px solid #444;
    color: #dde;
    font-size: 10px;
    line-height: 16px;
}
.spectrum {
    position: relative;
    width: 219px;
    height: 15px;
    margin-left: 3px;
    border: 1px solid #777;
    background:
        linear-gradient(rgba(255, 255, 255, 0.5), transparent 40%, transparent 50%, #000),
        linear-gradient(90deg, #f00, #ff0 17%, #0f0 33%, #0ff 50%, #00f 67%, #f0f 83%, #f00);
}
.spectrum span {
    position: absolute;
    right: 0;
    top: 0;
    width: 8px;
    height: 13px;
    background: linear-gradient(#fff 50%, #000 50%);
}
.panel-adjust { height: 122px; }
.adj-title {
    padding: 3px 0 0 9px;
    font-size: 10.500px;
    font-weight: 600;
    line-height: 15px;
    color: #e0e0e0;
}
.adj-row {
    height: 27px;
    padding-right: 34px;
    display: flex;
    justify-content: center;
    align-items: center;
    gap: 8px;
}
.adj-row svg { width: 16px; height: 16px; }

.panel-layers {
    flex: 1;
    min-height: 0;
    display: flex;
    flex-direction: column;
    border-bottom: 0;
}
.panel-layers .ptabs { height: 20px; flex: none; }
.lay-filter {
    height: 25px;
    flex: none;
    display: flex;
    align-items: center;
    padding-left: 5px;
    border-bottom: 1px solid #3a3a3a;
}
.sel-kind { width: 89px; font-size: 10.500px; }
.filter-icons {
    display: flex;
    align-items: center;
    gap: 10px;
    margin-left: 10px;
}
.filter-icons svg { width: 14px; height: 14px; }
.filter-t { width: 14px; text-align: center; font: 14px "Liberation Serif", serif; color: #ccc; }
.filter-toggle {
    width: 9px;
    height: 18px;
    margin-left: 13px;
    background: linear-gradient(#888 50%, #333 50%);
}
.lay-blend {
    height: 28px;
    flex: none;
    display: flex;
    align-items: center;
    padding: 2px 0 0 4px;
    border-bottom: 1px solid #3a3a3a;
}
.sel-normal { width: 128px; margin-right: 8px; }
.combo {
    position: relative;
    display: block;
    height: 19px;
    background: #3a3a3a;
    border: 1px solid #444;
    border-radius: 2px;
    color: #d8d8d8;
    font-size: 10px;
    line-height: 17px;
}
.combo em { font-style: normal; padding-left: 5px; white-space: nowrap; }
.combo-btn {
    position: absolute;
    right: 0;
    top: 0;
    bottom: 0;
    width: 18px;
    border-radius: 0 2px 2px 0;
    background: linear-gradient(#707070, #505050);
}
.combo-btn::after {
    content: "";
    position: absolute;
    left: 5px;
    top: 7px;
    border: 4px solid transparent;
    border-top: 4px solid #ddd;
    border-bottom: 0;
}
.combo-pct { width: 54px; margin-left: auto; margin-right: 5px; }
.lay-lock {
    height: 32px;
    flex: none;
    display: flex;
    align-items: center;
    padding-left: 6px;
    border-bottom: 1px solid #333;
}
.lock-px {
    width: 11px;
    height: 11px;
    margin-left: 9px;
    background: conic-gradient(#999 25%, #666 0 50%, #999 0 75%, #666 0) 0 0/6px 6px;
}
.lock-i { width: 14px; height: 14px; margin-left: 9px; }
.label-fill { margin-left: 44px; margin-top: -5px; }
.lay-list {
    height: 326px;
    flex: none;
    display: flex;
    overflow: hidden;
}
.rows { width: 225px; flex: none; }
.row {
    height: 30px;
    display: flex;
    align-items: center;
    border-bottom: 1px solid #333;
    overflow: hidden;
}
.row-group { height: 23px; }
.row-sel { background: #667a96; }
.eye {
    width: 30px;
    height: 100%;
    flex: none;
    display: flex;
    align-items: center;
    justify-content: center;
    border-right: 1px solid #333;
}
.eye svg { width: 14px; height: 10px; }
.green .eye { background: #5d7f3b; }
.blue .eye { background: #4a6b9b; }
.red .eye { background: #b34242; }
.twirl {
    width: 0;
    height: 0;
    margin-left: 4px;
    border: 5px solid transparent;
    border-top: 6px solid #ccc;
    border-bottom: 0;
}
.folder { width: 18px; height: 12px; margin-left: 3px; }
.row-group .lname { margin-left: 10px; }
.lname {
    margin-left: 10px;
    white-space: nowrap;
    font-size: 9.500px;
    color: #dfe6ee;
}
.thumb {
    position: relative;
    width: 32px;
    height: 23px;
    flex: none;
    margin-left: 20px;
    border: 1px solid #000;
    background: conic-gradient(#ccc 25%, #fff 0 50%, #ccc 0 75%, #fff 0) 0 0/8px 8px;
}
.thumb svg {
    position: absolute;
    right: -1px;
    bottom: -1px;
    width: 15px;
    height: 15px;
    background: #535353;
}
.thumb-logo::before {
    content: "";
    position: absolute;
    left: 2px;
    top: 1px;
    width: 7px;
    height: 7px;
    background: #000;
}
.thumb-c1::before, .thumb-c2::before {
    content: "";
    position: absolute;
    left: 2px;
    top: 10px;
    width: 3px;
    height: 3px;
    background: #000;
}
.thumb-c2::before { background: #777; }
.ltype {
    position: relative;
    width: 18px;
    height: 18px;
    flex: none;
    margin: 0 4px 0 30px;
    font: 15px/13px "Liberation Serif", serif;
    color: #ddd;
}
.ltype svg {
    position: absolute;
    left: 0;
    top: 0;
    width: 18px;
    height: 18px;
}
.tframe {
    position: relative;
    width: 36px;
    height: 25px;
    flex: none;
    margin: 0 -1px 0 18px;
    text-align: center;
    font: 14px/20px "Liberation Serif", serif;
    color: #e4e8ee;
}
/* corner brackets: 9px wide, 6px tall at each corner */
.tframe::before {
    content: "";
    position: absolute;
    inset: 0;
    background:
        linear-gradient(#e4e8ee, #e4e8ee) 0 0/9px 1px no-repeat,
        linear-gradient(#e4e8ee, #e4e8ee) 100% 0/9px 1px no-repeat,
        linear-gradient(#e4e8ee, #e4e8ee) 0 100%/9px 1px no-repeat,
        linear-gradient(#e4e8ee, #e4e8ee) 100% 100%/9px 1px no-repeat,
        linear-gradient(#e4e8ee, #e4e8ee) 0 0/1px 6px no-repeat,
        linear-gradient(#e4e8ee, #e4e8ee) 100% 0/1px 6px no-repeat,
        linear-gradient(#e4e8ee, #e4e8ee) 0 100%/1px 6px no-repeat,
        linear-gradient(#e4e8ee, #e4e8ee) 100% 100%/1px 6px no-repeat;
}
.lay-scroll {
    position: relative;
    flex: 1;
    background: #3c3c3c;
}
.thumbbar {
    position: absolute;
    left: 2px;
    right: 2px;
    top: 18px;
    height: 255px;
    background: #6e6e6e;
    border-radius: 4px;
}
.lay-scroll .up, .lay-scroll .down {
    position: absolute;
    left: 4px;
    border: 4px solid transparent;
}
.lay-scroll .up { top: 4px; border-bottom: 4px solid #ccc; border-top: 0; }
.lay-scroll .down { bottom: 4px; border-top: 4px solid #ccc; border-bottom: 0; }
.lay-foot {
    flex: 1;
    display: flex;
    align-items: center;
    padding-left: 36px;
    gap: 11px;
    border-top: 1px solid #333;
}
.lay-foot svg { width: 16px; height: 16px; }
.fx { width: 16px; font: italic 14px "Liberation Serif", serif; color: #aaa; text-align: center; }

/* floating panels */
.char-panel {
    position: absolute;
    left: 868px;
    top: 157px;
    width: 216px;
    height: 245px;
    display: flex;
    flex-direction: column;
    background: #535353;
    border: 1px solid #2e2e2e;
}
.char-tabs { height: 20px; flex: none; }
.char-tabs .ptab { padding: 0 6.500px; }
.char-arrows {
    position: absolute;
    right: 22px;
    top: 4px;
    color: #ccc;
    font-size: 9px;
}
.char-font {
    height: 28px;
    flex: none;
    display: flex;
    align-items: center;
    padding: 0 0 2px 8px;
    gap: 9px;
    border-bottom: 1px solid #3a3a3a;
}
.combo-family { width: 111px; }
.combo-style { width: 77px; }
.char-size {
    height: 53px;
    flex: none;
    display: grid;
    grid-template-columns: 20px 79px 27px 74px;
    grid-auto-rows: 19px;
    row-gap: 5px;
    padding: 5px 0 0 4px;
    border-bottom: 1px solid #3a3a3a;
}
.combo-active { border-color: #4a78c8; }
.combo-active em { padding-left: 2px; display: block; background: #fff; margin-right: 18px; height: 17px; }
.combo-active mark { background: #3a70d8; color: #fff; }
.ci {
    color: #c8c8c8;
    display: flex;
    align-items: center;
    justify-content: center;
    white-space: nowrap;
}
.ci-serif { font: 18px "Liberation Serif", serif; }
.ci-serif small { font-size: 12px; align-self: flex-end; }
.ci-small { font: bold 10px "Liberation Sans", sans-serif; }
.ci-boxed { background: #999; color: #333; height: 11px; margin: 2px 3px; }
.ci sup { font-size: 8px; }
.char-scale {
    height: 48px;
    flex: none;
    display: grid;
    grid-template-columns: 20px 54px 68px 54px;
    grid-auto-rows: 20px;
    padding: 5px 0 0 5px;
    border-bottom: 1px solid #3a3a3a;
}
.field {
    display: block;
    height: 18px;
    padding-left: 5px;
    background: #3a3a3a;
    border: 1px solid #444;
    color: #d8d8d8;
    font-size: 10px;
    line-height: 16px;
}
.ci-right { justify-content: flex-end; padding-right: 3px; }
.ci-color { text-align: right; padding-right: 8px; line-height: 18px; color: #cfcfcf; font-size: 10px; }
.color-chip { background: #000; border: 1px solid #444; height: 18px; }
.glyphs {
    height: 32px;
    flex: none;
    display: grid;
    grid-template-columns: repeat(8, 24.400px);
    padding-left: 9px;
    align-items: center;
    justify-items: center;
    border-bottom: 1px solid #3a3a3a;
    font: bold 15px "Liberation Serif", serif;
    color: #c8c8c8;
}
.glyphs-2 { padding-top: 3px; }
.glyphs sup, .glyphs sub { font-size: 9px; line-height: 0; }
.glyphs small { font-size: 11px; }
.glyph-on {
    width: 21px;
    height: 22px;
    text-align: center;
    line-height: 22px;
    background: #3a3a3a;
    border-radius: 2px;
}
.dim { color: #7c7c7c; }
.aa { text-decoration: overline; }
.char-lang {
    flex: 1;
    display: flex;
    align-items: center;
    padding: 0 0 1px 9px;
}
.sel-lang { width: 104px; }
.aa-ico {
    width: 26px;
    text-align: center;
    font: 12px "Liberation Serif", serif;
    color: #ccc;
}
.aa-ico b { font-size: 13px; }
.sel-sharp { width: 66px; }

.tooltip {
    position: absolute;
    left: 1107px;
    top: 203px;
    width: 63px;
    height: 18px;
    border: 1px solid #666;
    border-radius: 2px;
    background: linear-gradient(#fff, #e4e4ee);
    color: #575757;
    font: 11px/16px "Open Sans", sans-serif;
    text-align: center;
}
```
